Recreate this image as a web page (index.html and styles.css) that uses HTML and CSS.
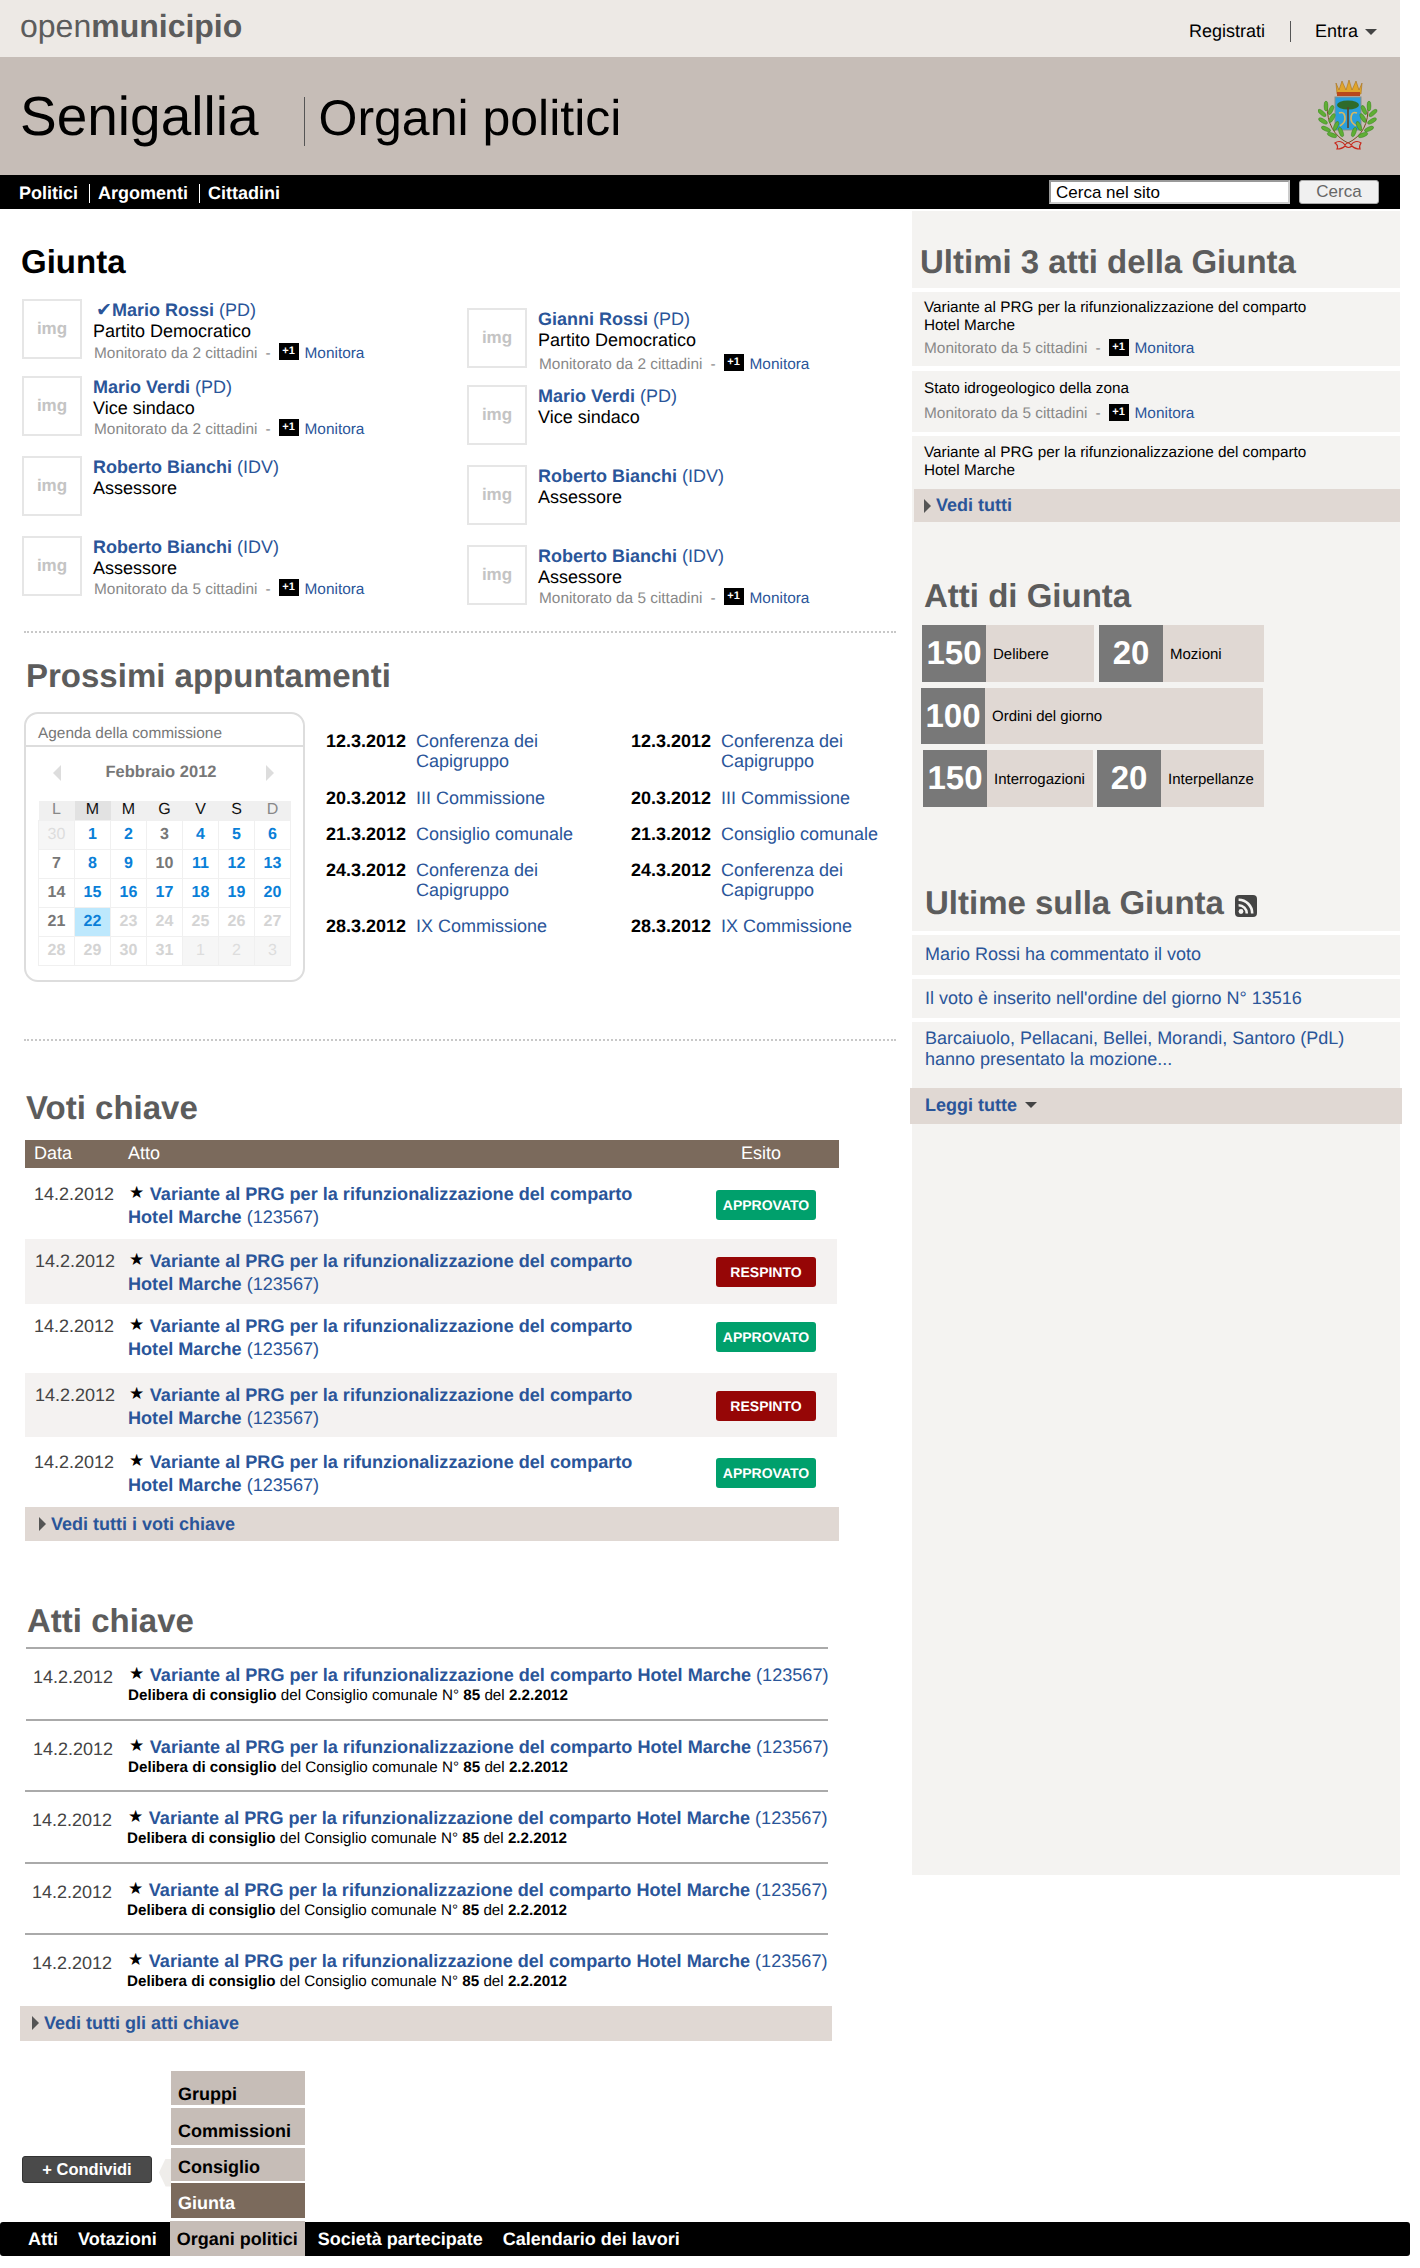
FILE: index.html
```html
<!DOCTYPE html>
<html lang="it">
<head>
  <meta charset="UTF-8">
  <meta name="viewport" content="width=device-width, initial-scale=1.0">
  <title>Senigallia - Organi politici</title>
  <link rel="stylesheet" href="styles.css">
</head>
<body>

  <header class="top_bar">
    <a class="logo">open<b>municipio</b></a>
    <a class="top_link">Registrati</a>
    <a class="top_link top_entra">Entra <i class="caret"></i></a>
  </header>

  <div class="band">
    <h1 class="city">Senigallia</h1>
    <span class="page_name">Organi politici</span>
    <svg class="stemma" viewBox="0 0 60 72" width="60" height="72" xmlns="http://www.w3.org/2000/svg">
      <!-- corona -->
      <path d="M18 3l3 7 3-9 4 9 3-10 3 10 4-9 3 9 3-7-1 11H19z" fill="#e0a52c" stroke="#a8701a" stroke-width=".6"/>
      <rect x="19" y="12" width="23" height="4" fill="#b8481c"/>
      <!-- scudo -->
      <rect x="17" y="17" width="26" height="33" fill="#2a9fdc" stroke="#8a8f88" stroke-width="1"/>
      <ellipse cx="30" cy="25" rx="11" ry="4.5" fill="#2f6b2a"/>
      <path d="M30 27v21" stroke="#5a4326" stroke-width="1.6"/>
      <path d="M21 33c5-2 6 2 6 6s-3 5-5 7M39 33c-5-2-6 2-6 6s3 5 5 7" fill="none" stroke="#d9b860" stroke-width="1.6"/>
      <!-- rami -->
      <path d="M30 63C16 56 9 44 9 24" fill="none" stroke="#7a4a22" stroke-width="1"/>
      <path d="M30 63C44 56 51 44 50 24" fill="none" stroke="#7a4a22" stroke-width="1"/>
      <g fill="#5fae34" stroke="#2f7a1f" stroke-width=".4">
        <ellipse cx="8" cy="26" rx="2" ry="5"/>
        <ellipse cx="13" cy="30" rx="2" ry="5" transform="rotate(25 13 30)"/>
        <ellipse cx="4" cy="33" rx="2" ry="5" transform="rotate(-50 4 33)"/>
        <ellipse cx="14" cy="38" rx="2" ry="5" transform="rotate(30 14 38)"/>
        <ellipse cx="5" cy="41" rx="2" ry="5" transform="rotate(-60 5 41)"/>
        <ellipse cx="18" cy="46" rx="2" ry="5" transform="rotate(25 18 46)"/>
        <ellipse cx="8" cy="49" rx="2" ry="5" transform="rotate(-65 8 49)"/>
        <ellipse cx="23" cy="52" rx="2" ry="5" transform="rotate(-20 23 52)"/>
        <ellipse cx="14" cy="55" rx="2" ry="5" transform="rotate(-70 14 55)"/>
        <ellipse cx="51" cy="26" rx="2" ry="5"/>
        <ellipse cx="46" cy="30" rx="2" ry="5" transform="rotate(-25 46 30)"/>
        <ellipse cx="55" cy="33" rx="2" ry="5" transform="rotate(50 55 33)"/>
        <ellipse cx="45" cy="38" rx="2" ry="5" transform="rotate(-30 45 38)"/>
        <ellipse cx="54" cy="41" rx="2" ry="5" transform="rotate(60 54 41)"/>
        <ellipse cx="41" cy="46" rx="2" ry="5" transform="rotate(-25 41 46)"/>
        <ellipse cx="51" cy="49" rx="2" ry="5" transform="rotate(65 51 49)"/>
        <ellipse cx="36" cy="52" rx="2" ry="5" transform="rotate(20 36 52)"/>
        <ellipse cx="45" cy="55" rx="2" ry="5" transform="rotate(70 45 55)"/>
      </g>
      <!-- nastro -->
      <path d="M17 63c4-3 8-1 10 2 2-3 4-3 6 0 2-3 6-5 10-2-2 3-2 4-1 6-4 0-6-1-8-3-3 2-4 2-7 0-2 2-4 3-8 3 1-2 1-4-2-6z" fill="none" stroke="#c8281c" stroke-width="1.2"/>
    </svg>
  </div>

  <nav class="main_nav">
    <a class="nav_link">Politici</a>
    <a class="nav_link">Argomenti</a>
    <a class="nav_link">Cittadini</a>
    <form class="search">
      <input class="search_input" type="text" value="Cerca nel sito">
      <button class="search_button" type="button">Cerca</button>
    </form>
  </nav>

  <div class="columns">
    <main class="content">

      <h2 class="title_black">Giunta</h2>
      <section class="people">
        <div class="people_col">
          <div class="person">
            <div class="thumb">img</div>
            <div class="person_text">
              <a class="name name_checked"><span class="check">✔</span><b>Mario Rossi</b> (PD)</a>
              <div class="role">Partito Democratico</div>
              <div class="watch">Monitorato da 2 cittadini<span class="dash">-</span><span class="plus">+1</span><a class="watch_link">Monitora</a></div>
            </div>
          </div>
          <div class="person">
            <div class="thumb">img</div>
            <div class="person_text">
              <a class="name"><b>Mario Verdi</b> (PD)</a>
              <div class="role">Vice sindaco</div>
              <div class="watch">Monitorato da 2 cittadini<span class="dash">-</span><span class="plus">+1</span><a class="watch_link">Monitora</a></div>
            </div>
          </div>
          <div class="person">
            <div class="thumb">img</div>
            <div class="person_text">
              <a class="name"><b>Roberto Bianchi</b> (IDV)</a>
              <div class="role">Assessore</div>
            </div>
          </div>
          <div class="person">
            <div class="thumb">img</div>
            <div class="person_text">
              <a class="name"><b>Roberto Bianchi</b> (IDV)</a>
              <div class="role">Assessore</div>
              <div class="watch">Monitorato da 5 cittadini<span class="dash">-</span><span class="plus">+1</span><a class="watch_link">Monitora</a></div>
            </div>
          </div>
        </div>
        <div class="people_col people_col_right">
          <div class="person">
            <div class="thumb">img</div>
            <div class="person_text">
              <a class="name"><b>Gianni Rossi</b> (PD)</a>
              <div class="role">Partito Democratico</div>
              <div class="watch">Monitorato da 2 cittadini<span class="dash">-</span><span class="plus">+1</span><a class="watch_link">Monitora</a></div>
            </div>
          </div>
          <div class="person">
            <div class="thumb">img</div>
            <div class="person_text">
              <a class="name"><b>Mario Verdi</b> (PD)</a>
              <div class="role">Vice sindaco</div>
            </div>
          </div>
          <div class="person">
            <div class="thumb">img</div>
            <div class="person_text">
              <a class="name"><b>Roberto Bianchi</b> (IDV)</a>
              <div class="role">Assessore</div>
            </div>
          </div>
          <div class="person">
            <div class="thumb">img</div>
            <div class="person_text">
              <a class="name"><b>Roberto Bianchi</b> (IDV)</a>
              <div class="role">Assessore</div>
              <div class="watch">Monitorato da 5 cittadini<span class="dash">-</span><span class="plus">+1</span><a class="watch_link">Monitora</a></div>
            </div>
          </div>
        </div>
      </section>

      <hr class="dotted dotted_first">

      <h2 class="title title_appointments">Prossimi appuntamenti</h2>
      <section class="agenda">
        <div class="calendar">
          <div class="calendar_title">Agenda della commissione</div>
          <div class="calendar_month">
            <i class="arrow_left"></i>
            <span>Febbraio 2012</span>
            <i class="arrow_right"></i>
          </div>
          <table class="calendar_table">
            <tr>
              <th class="off">L</th><th class="today_col">M</th><th>M</th><th>G</th><th>V</th><th>S</th><th class="off">D</th>
            </tr>
            <tr>
              <td class="out">30</td><td class="ev">1</td><td class="ev">2</td><td>3</td><td class="ev">4</td><td class="ev">5</td><td class="ev">6</td>
            </tr>
            <tr>
              <td>7</td><td class="ev">8</td><td class="ev">9</td><td>10</td><td class="ev">11</td><td class="ev">12</td><td class="ev">13</td>
            </tr>
            <tr>
              <td>14</td><td class="ev">15</td><td class="ev">16</td><td class="ev">17</td><td class="ev">18</td><td class="ev">19</td><td class="ev">20</td>
            </tr>
            <tr>
              <td>21</td><td class="ev today">22</td><td class="later">23</td><td class="later">24</td><td class="later">25</td><td class="later">26</td><td class="later">27</td>
            </tr>
            <tr>
              <td class="later">28</td><td class="later">29</td><td class="later">30</td><td class="later">31</td><td class="out">1</td><td class="out">2</td><td class="out">3</td>
            </tr>
          </table>
        </div>
        <ul class="dates">
          <li><b>12.3.2012</b><a>Conferenza dei Capigruppo</a></li>
          <li><b>20.3.2012</b><a>III Commissione</a></li>
          <li><b>21.3.2012</b><a>Consiglio comunale</a></li>
          <li><b>24.3.2012</b><a>Conferenza dei Capigruppo</a></li>
          <li><b>28.3.2012</b><a>IX Commissione</a></li>
        </ul>
        <ul class="dates">
          <li><b>12.3.2012</b><a>Conferenza dei Capigruppo</a></li>
          <li><b>20.3.2012</b><a>III Commissione</a></li>
          <li><b>21.3.2012</b><a>Consiglio comunale</a></li>
          <li><b>24.3.2012</b><a>Conferenza dei Capigruppo</a></li>
          <li><b>28.3.2012</b><a>IX Commissione</a></li>
        </ul>
      </section>

      <hr class="dotted dotted_second">

      <h2 class="title title_votes">Voti chiave</h2>
      <section class="votes">
        <div class="votes_head">
          <span>Data</span><span>Atto</span><span class="votes_esito">Esito</span>
        </div>
        <div class="vote">
          <span class="date">14.2.2012</span>
          <a class="act"><span class="star">★</span><b>Variante al PRG per la rifunzionalizzazione del comparto</b><br><b>Hotel Marche</b> (123567)</a>
          <span class="badge badge_ok">APPROVATO</span>
        </div>
        <div class="vote">
          <span class="date">14.2.2012</span>
          <a class="act"><span class="star">★</span><b>Variante al PRG per la rifunzionalizzazione del comparto</b><br><b>Hotel Marche</b> (123567)</a>
          <span class="badge badge_no">RESPINTO</span>
        </div>
        <div class="vote">
          <span class="date">14.2.2012</span>
          <a class="act"><span class="star">★</span><b>Variante al PRG per la rifunzionalizzazione del comparto</b><br><b>Hotel Marche</b> (123567)</a>
          <span class="badge badge_ok">APPROVATO</span>
        </div>
        <div class="vote">
          <span class="date">14.2.2012</span>
          <a class="act"><span class="star">★</span><b>Variante al PRG per la rifunzionalizzazione del comparto</b><br><b>Hotel Marche</b> (123567)</a>
          <span class="badge badge_no">RESPINTO</span>
        </div>
        <div class="vote">
          <span class="date">14.2.2012</span>
          <a class="act"><span class="star">★</span><b>Variante al PRG per la rifunzionalizzazione del comparto</b><br><b>Hotel Marche</b> (123567)</a>
          <span class="badge badge_ok">APPROVATO</span>
        </div>
        <a class="more more_votes"><i class="arrow_more"></i>Vedi tutti i voti chiave</a>
      </section>

      <h2 class="title title_acts">Atti chiave</h2>
      <section class="acts">
        <div class="act_row">
          <span class="date">14.2.2012</span>
          <div>
            <a class="act_title"><span class="star">★</span><b>Variante al PRG per la rifunzionalizzazione del comparto Hotel Marche</b> (123567)</a>
            <div class="act_sub"><b>Delibera di consiglio</b> del Consiglio comunale N° <b>85</b> del <b>2.2.2012</b></div>
          </div>
        </div>
        <div class="act_row">
          <span class="date">14.2.2012</span>
          <div>
            <a class="act_title"><span class="star">★</span><b>Variante al PRG per la rifunzionalizzazione del comparto Hotel Marche</b> (123567)</a>
            <div class="act_sub"><b>Delibera di consiglio</b> del Consiglio comunale N° <b>85</b> del <b>2.2.2012</b></div>
          </div>
        </div>
        <div class="act_row">
          <span class="date">14.2.2012</span>
          <div>
            <a class="act_title"><span class="star">★</span><b>Variante al PRG per la rifunzionalizzazione del comparto Hotel Marche</b> (123567)</a>
            <div class="act_sub"><b>Delibera di consiglio</b> del Consiglio comunale N° <b>85</b> del <b>2.2.2012</b></div>
          </div>
        </div>
        <div class="act_row">
          <span class="date">14.2.2012</span>
          <div>
            <a class="act_title"><span class="star">★</span><b>Variante al PRG per la rifunzionalizzazione del comparto Hotel Marche</b> (123567)</a>
            <div class="act_sub"><b>Delibera di consiglio</b> del Consiglio comunale N° <b>85</b> del <b>2.2.2012</b></div>
          </div>
        </div>
        <div class="act_row">
          <span class="date">14.2.2012</span>
          <div>
            <a class="act_title"><span class="star">★</span><b>Variante al PRG per la rifunzionalizzazione del comparto Hotel Marche</b> (123567)</a>
            <div class="act_sub"><b>Delibera di consiglio</b> del Consiglio comunale N° <b>85</b> del <b>2.2.2012</b></div>
          </div>
        </div>
      </section>
      <a class="more more_acts"><i class="arrow_more"></i>Vedi tutti gli atti chiave</a>

      <div class="bottom_row">
        <button class="share" type="button">+ Condividi</button>
        <i class="share_nub"></i>
        <div class="sub_menu">
          <a class="sub_link sub_gruppi">Gruppi</a>
          <a class="sub_link sub_commissioni">Commissioni</a>
          <a class="sub_link sub_consiglio">Consiglio</a>
          <a class="sub_link sub_giunta">Giunta</a>
        </div>
      </div>
    </main>

    <aside class="sidebar">
      <h2 class="side_title side_title_first">Ultimi 3 atti della Giunta</h2>
      <div class="side_act side_act_one">
        <p>Variante al PRG per la rifunzionalizzazione del comparto Hotel Marche</p>
        <div class="watch">Monitorato da 5 cittadini<span class="dash">-</span><span class="plus">+1</span><a class="watch_link">Monitora</a></div>
      </div>
      <div class="side_act side_act_two">
        <p>Stato idrogeologico della zona</p>
        <div class="watch">Monitorato da 5 cittadini<span class="dash">-</span><span class="plus">+1</span><a class="watch_link">Monitora</a></div>
      </div>
      <div class="side_act side_act_three">
        <p>Variante al PRG per la rifunzionalizzazione del comparto Hotel Marche</p>
      </div>
      <a class="more more_side"><i class="arrow_more"></i>Vedi tutti</a>

      <h2 class="side_title side_title_stats">Atti di Giunta</h2>
      <div class="stats">
        <div class="stats_row">
          <div class="stat stat_delibere"><b>150</b><span>Delibere</span></div>
          <div class="stat stat_mozioni"><b>20</b><span>Mozioni</span></div>
        </div>
        <div class="stats_row">
          <div class="stat stat_ordini"><b>100</b><span>Ordini del giorno</span></div>
        </div>
        <div class="stats_row">
          <div class="stat stat_interrogazioni"><b>150</b><span>Interrogazioni</span></div>
          <div class="stat stat_interpellanze"><b>20</b><span>Interpellanze</span></div>
        </div>
      </div>

      <h2 class="side_title side_title_news">Ultime sulla Giunta
        <svg class="rss" viewBox="0 0 22 22" width="22" height="22" xmlns="http://www.w3.org/2000/svg">
          <rect width="22" height="22" rx="4" fill="#444"/>
          <circle cx="6" cy="16.5" r="2.4" fill="#f4f3f1"/>
          <path d="M3.6 10.2a8.2 8.2 0 0 1 8.2 8.2" fill="none" stroke="#f4f3f1" stroke-width="2.6"/>
          <path d="M3.6 4.8a13.6 13.6 0 0 1 13.6 13.6" fill="none" stroke="#f4f3f1" stroke-width="2.6"/>
        </svg>
      </h2>
      <a class="news_item">Mario Rossi ha commentato il voto</a>
      <a class="news_item">Il voto è inserito nell'ordine del giorno N° 13516</a>
      <a class="news_item news_item_long">Barcaiuolo, Pellacani, Bellei, Morandi, Santoro (PdL) hanno presentato la mozione...</a>
      <a class="more more_news">Leggi tutte <i class="caret"></i></a>
    </aside>
  </div>

  <footer class="site_footer">
    <a class="foot_link">Atti</a>
    <a class="foot_link">Votazioni</a>
    <a class="foot_link foot_active">Organi politici</a>
    <a class="foot_link">Società partecipate</a>
    <a class="foot_link">Calendario dei lavori</a>
  </footer>

</body>
</html>
```

FILE: styles.css
```css
* {
  margin: 0;
  padding: 0;
  box-sizing: border-box;
}
body {
  width: 1420px;
  background: white;
  color: black;
  font-family: "Liberation Sans", Arial, sans-serif;
  font-size: 18px;
  text-rendering: geometricPrecision;
  overflow-x: hidden;
}
a {
  color: #2a5599;
}
ul {
  list-style: none;
}

/* top */
.top_bar {
  display: flex;
  align-items: baseline;
  width: 1400px;
  height: 57px;
  padding: 8px 23px 0 20px;
  background: #ede9e5;
}
.logo {
  margin-right: auto;
  color: #5c5c5c;
  font-size: 32px;
  line-height: 37px;
}
.top_link {
  color: black;
  line-height: 21px;
}
.top_entra {
  margin-left: 25px;
  padding-left: 24px;
  border-left: 1px solid #555;
}
.caret {
  display: inline-block;
  margin-left: 2px;
  vertical-align: middle;
  border-top: 6px solid #444;
  border-left: 6px solid transparent;
  border-right: 6px solid transparent;
}
.band {
  display: flex;
  align-items: baseline;
  width: 1400px;
  height: 118px;
  padding: 0 22px 0 20px;
  background: #c6bdb7;
}
.city {
  margin: 28px 45px 0 0;
  font-size: 55px;
  font-weight: normal;
  line-height: 62px;
}
.page_name {
  padding: 0 0 6px 14px;
  border-left: 1px solid #555;
  font-size: 50px;
  line-height: 43px;
}
.stemma {
  align-self: flex-start;
  margin: 23px 0 0 auto;
}
.main_nav {
  display: flex;
  align-items: center;
  width: 1400px;
  height: 34px;
  padding: 2px 21px 0 19px;
  background: black;
}
.nav_link {
  color: white;
  font-weight: bold;
  line-height: 19px;
}
.nav_link + .nav_link {
  margin-left: 11px;
  padding-left: 8px;
  border-left: 1px solid white;
}
.search {
  display: flex;
  gap: 9px;
  margin: -2px 0 0 auto;
}
.search_input {
  width: 241px;
  height: 24px;
  padding: 1px 5px 0;
  border: 2px solid #ccc;
  border-top-color: #999;
  border-left-color: #999;
  background: white;
  font: 17px "Liberation Sans", Arial, sans-serif;
}
.search_button {
  width: 80px;
  height: 24px;
  border: 1px solid #aaa;
  border-radius: 3px;
  background: #f0f0f0;
  color: #666;
  font: 17px "Liberation Sans", Arial, sans-serif;
}

/* columns */
.columns {
  display: flex;
  width: 1400px;
}
.content {
  width: 912px;
  flex-shrink: 0;
}
.title_black,
.title,
.side_title {
  font-size: 33px;
  font-weight: bold;
  line-height: 38px;
}
.title {
  color: #5c5c5c;
  margin-left: 26px;
}
.title_black {
  margin: 34px 0 0 21px;
}

/* people */
.people {
  display: flex;
  padding: 18px 0 0 22px;
}
.people_col {
  width: 445px;
}
.people_col_right {
  padding-top: 9px;
}
.person {
  display: flex;
  gap: 11px;
  height: 60px;
  margin-bottom: 20px;
}
.person:first-child {
  margin-bottom: 17px;
}
.person:first-child .watch {
  margin-top: 1px;
}
.people_col_right .person:first-child .watch {
  margin-top: 3px;
}
.thumb {
  width: 60px;
  height: 60px;
  border: 2px solid #e6e6e6;
  color: #c4c4c4;
  font-size: 17px;
  font-weight: bold;
  line-height: 56px;
  text-align: center;
}
.person_text {
  padding-top: 1px;
  line-height: 21px;
}
.person_text .watch {
  padding-left: 1px;
}
.name {
  display: block;
}
.name_checked {
  padding-left: 3px;
}
.check {
  font-family: "DejaVu Sans", sans-serif;
  font-size: 19px;
  line-height: 20px;
}
.role {
  line-height: 21px;
}
.watch {
  display: flex;
  align-items: center;
  height: 21px;
  color: #888;
  font-size: 15.4px;
}
.dash {
  margin: 0 8px;
}
.plus {
  width: 20px;
  height: 17px;
  margin: -4px 6px 0 0;
  background: black;
  color: white;
  font-size: 11px;
  font-weight: bold;
  line-height: 16px;
  text-align: center;
}
.dotted {
  width: 872px;
  margin-left: 24px;
  border: 0;
  border-top: 2px dotted #c8c8c8;
}
.dotted_first {
  margin-top: 6px;
}

/* agenda */
.title_appointments {
  margin-top: 24px;
}
.agenda {
  display: flex;
  margin-top: 17px;
  padding-left: 24px;
}
.calendar {
  width: 281px;
  height: 270px;
  margin-right: 21px;
  flex-shrink: 0;
  border: 2px solid #ddd;
  border-radius: 14px;
}
.calendar_title {
  height: 33px;
  padding: 3px 0 0 12px;
  border-bottom: 2px solid #ddd;
  color: #777;
  font-size: 15.4px;
  line-height: 34px;
}
.calendar_month {
  display: flex;
  align-items: center;
  justify-content: space-between;
  height: 54px;
  padding: 0 29px 3px 27px;
  color: #777;
  font-size: 16.5px;
  font-weight: bold;
}
.calendar_month span {
  margin-left: -5px;
}
.arrow_left,
.arrow_right {
  border-top: 8px solid transparent;
  border-bottom: 8px solid transparent;
}
.arrow_left {
  border-right: 8px solid #ddd;
}
.arrow_right {
  border-left: 8px solid #ddd;
}
.calendar_table {
  width: 253px;
  margin-left: 12px;
  border-collapse: collapse;
  table-layout: fixed;
  font-size: 16px;
}
.calendar_table th {
  height: 19px;
  background: #f0f0f0;
  color: #111;
  font-weight: normal;
  line-height: 18px;
}
.calendar_table th.off {
  color: #888;
}
.calendar_table th.today_col {
  background: #e2e2e2;
}
.calendar_table td {
  height: 29.2px;
  padding: 0;
  border: 1px solid #f0f0f0;
  color: #777;
  font-weight: bold;
  text-align: center;
}
.calendar_table td.ev {
  color: #0a7fd8;
}
.calendar_table td.today {
  background: #bde8fd;
}
.calendar_table td.later {
  color: #d4d4d4;
}
.calendar_table td.out {
  background: #f6f6f6;
  color: #ddd;
  font-weight: normal;
}
.dates {
  width: 305px;
  flex-shrink: 0;
  padding-top: 19px;
  line-height: 20px;
}
.dates li {
  display: flex;
  margin-bottom: 16px;
}
.dates li:first-child {
  margin-bottom: 17px;
}
.dates b {
  width: 90px;
  flex-shrink: 0;
}
.dates a {
  width: 160px;
}
.dotted_second {
  margin-top: 57px;
}

/* voti */
.title_votes {
  margin-top: 48px;
}
.votes {
  width: 814px;
  margin: 13px 0 0 25px;
}
.votes_head {
  display: grid;
  grid-template-columns: 94px 613px auto;
  height: 28px;
  padding-left: 9px;
  background: #7b6a5c;
  color: white;
  line-height: 26px;
}
.vote {
  display: grid;
  grid-template-columns: 94px 588px 100px;
  width: 812px;
  padding-left: 9px;
  line-height: 22px;
}
.vote:nth-child(2) {
  height: 71px;
  padding-top: 15px;
}
.vote:nth-child(3) {
  height: 65px;
  padding-top: 11px;
  background: #f4f2f1;
}
.vote:nth-child(4) {
  height: 69px;
  padding-top: 11px;
}
.vote:nth-child(5) {
  height: 64px;
  padding-top: 11px;
  background: #f4f2f1;
}
.vote:nth-child(6) {
  height: 70px;
  padding-top: 14px;
}
.vote:nth-child(odd) .date {
  margin-left: 1px;
}
.date {
  color: #444;
  line-height: 22px;
}
.act {
  display: block;
  font-size: 18.1px;
}
.star {
  position: relative;
  top: -2px;
  margin: 0 5.5px 0 1px;
  color: black;
  font-family: "DejaVu Sans", sans-serif;
  font-size: 17px;
}
.badge {
  height: 30px;
  margin-top: 7px;
  border-radius: 3px;
  color: white;
  font-size: 14px;
  font-weight: bold;
  line-height: 31px;
  text-align: center;
}
.badge_ok {
  background: #00a06c;
}
.badge_no {
  background: #960606;
}
.more {
  display: flex;
  align-items: center;
  background: #e0d8d3;
  font-weight: bold;
}
.arrow_more {
  margin-right: 5px;
  border-top: 7px solid transparent;
  border-bottom: 7px solid transparent;
  border-left: 7px solid #555;
}
.more_votes {
  height: 34px;
  padding-left: 14px;
}

/* atti */
.title_acts {
  margin: 61px 0 0 27px;
}
.acts {
  width: 802px;
  margin: 7px 0 0 26px;
}
.act_row {
  display: flex;
  height: 71.5px;
  padding: 16px 0 0 7px;
  border-top: 2px solid #aaa;
}
.act_row:nth-child(n+3) {
  margin-left: -1px;
}
.act_row .date {
  width: 95px;
  flex-shrink: 0;
  line-height: 24px;
}
.act_title {
  display: block;
  width: 710px;
  font-size: 18.1px;
  line-height: 21px;
  white-space: nowrap;
}
.act_sub {
  font-size: 15.2px;
  line-height: 17px;
}
.more_acts {
  width: 812px;
  height: 35px;
  margin: 1px 0 0 20px;
  padding-left: 12px;
}

/* bottom */
.bottom_row {
  display: flex;
  align-items: flex-end;
  margin-top: 30px;
  padding-left: 22px;
}
.share {
  width: 130px;
  height: 27px;
  margin: 0 7px 39px 0;
  border: 1px solid #333;
  border-radius: 3px;
  background: #4a4a4a;
  color: white;
  font: bold 16.5px "Liberation Sans", Arial, sans-serif;
}
.share_nub {
  width: 12px;
  height: 28px;
  margin-bottom: 35px;
  background: #efedea;
  clip-path: polygon(100% 0, 100% 100%, 55% 100%, 0 50%, 55% 0);
}
.sub_menu {
  width: 134px;
  margin-bottom: 4px;
}
.sub_link {
  display: flex;
  align-items: flex-end;
  padding: 0 0 4px 7px;
  background: #c6bdb7;
  color: black;
  font-weight: bold;
  line-height: 20px;
}
.sub_gruppi {
  height: 34px;
  margin-bottom: 3px;
  padding-bottom: 1px;
}
.sub_commissioni {
  height: 37px;
  margin-bottom: 3px;
}
.sub_consiglio {
  height: 33px;
  margin-bottom: 2px;
}
.sub_giunta {
  height: 35px;
  padding-bottom: 5px;
  background: #7b6a5c;
  color: white;
}

/* sidebar */
.sidebar {
  width: 488px;
  height: 1664px;
  margin-top: 2px;
  background: #f4f3f1;
}
.side_title {
  color: #5c5c5c;
}
.side_title_first {
  height: 77px;
  padding: 32px 0 0 8px;
  line-height: 38px;
}
.side_act {
  padding-left: 12px;
  border-top: 4px solid white;
}
.side_act p {
  width: 400px;
  font-size: 15.3px;
  line-height: 18px;
}
.side_act .watch {
  height: 18px;
}
.side_act_one {
  height: 83px;
  padding-top: 7px;
  border-bottom: 5px solid white;
}
.side_act_one .watch {
  margin-top: 5px;
}
.side_act_two {
  height: 61px;
  border-top: 0;
  padding-top: 9px;
}
.side_act_two .watch {
  margin-top: 7px;
}
.side_act_three {
  height: 57px;
  padding-top: 8px;
}
.more_side {
  height: 33px;
  margin-left: 2px;
  padding-left: 10px;
}
.side_title_stats {
  margin: 55px 0 0 12px;
}
.stats {
  margin-top: 10px;
}
.stats_row {
  display: flex;
  margin-bottom: 6px;
  margin-left: 10px;
}
.stats_row:nth-child(2) {
  margin-left: 9px;
}
.stats_row:nth-child(3) {
  margin-left: 11px;
}
.stat {
  display: flex;
  align-items: center;
  height: 56.5px;
  background: #e0d8d3;
  color: black;
  font-size: 15px;
}
.stat span {
  padding-top: 2px;
}
.stat b {
  width: 64px;
  height: 100%;
  margin-right: 7px;
  background: #787878;
  color: white;
  font-size: 33px;
  line-height: 56px;
  text-align: center;
}
.stat_delibere {
  width: 172px;
  margin-right: 5px;
}
.stat_mozioni {
  width: 165px;
}
.stat_ordini {
  width: 342px;
}
.stat_interrogazioni {
  width: 170px;
  margin-right: 4px;
}
.stat_interpellanze {
  width: 167px;
}
.side_title_news {
  height: 47.5px;
  margin-top: 77px;
  padding-left: 13px;
}
.rss {
  margin-left: 2px;
  vertical-align: -3px;
}
.news_item {
  display: flex;
  align-items: center;
  height: 43.5px;
  padding: 0 0 0 13px;
  border-top: 4px solid white;
  line-height: 21px;
}
.news_item_long {
  height: 70px;
  padding: 0 40px 12px 13px;
}
.more_news {
  height: 36px;
  margin: 0 -2px;
  padding: 0 0 2px 15px;
  white-space: pre;
}
.more_news .caret {
  margin-left: 3px;
}

/* footer */
.site_footer {
  display: flex;
  align-items: center;
  width: 1410px;
  height: 34px;
  padding: 1px 0 0 18px;
  border-radius: 3px;
  background: black;
}
.foot_link {
  padding: 0 10px;
  color: white;
  font-weight: bold;
}
.foot_active {
  display: flex;
  align-items: center;
  height: 36px;
  margin: -1px 3px 0;
  padding: 1px 7px 0;
  background: #c6bdb7;
  color: black;
}
```
